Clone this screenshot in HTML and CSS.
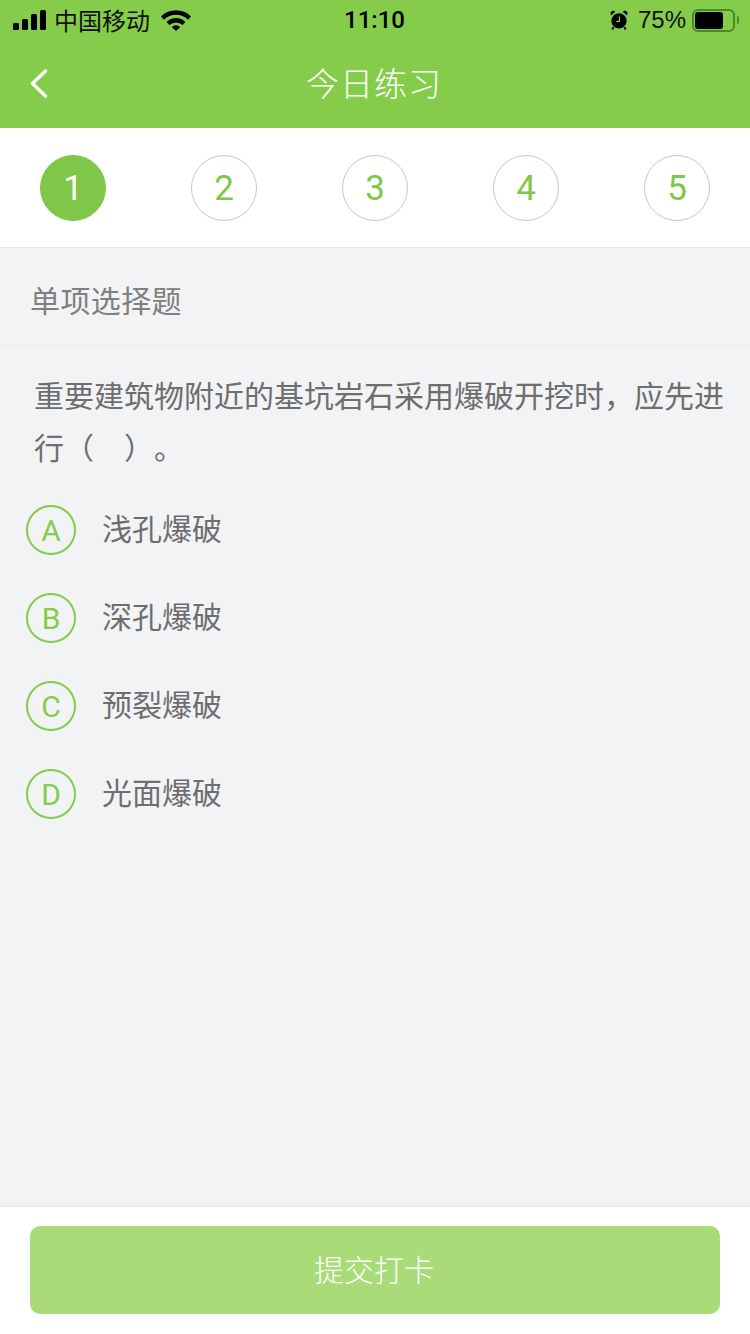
FILE: index.html
```html
<!DOCTYPE html>
<html lang="zh-CN">
<head>
  <meta charset="UTF-8">
  <title>今日练习</title>
  <link rel="stylesheet" href="styles.css">
</head>
<body>
  <div class="page">
    <div class="header">
      <div class="status-bar">
        <div class="status-left">
          <svg class="signal" width="34" height="20" viewBox="0 0 34 20">
            <rect x="0" y="13" width="6" height="7" rx="1.5"/>
            <rect x="9" y="9" width="6" height="11" rx="1.5"/>
            <rect x="18" y="4" width="6" height="16" rx="1.5"/>
            <rect x="27" y="0" width="6" height="20" rx="1.5"/>
          </svg>
          <span class="carrier">中国移动</span>
          <svg class="wifi" width="30" height="22" viewBox="0 0 30 22">
            <path d="M0 7.5 A21 21 0 0 1 30 7.5 L27 10.7 A17 17 0 0 0 3 10.7 Z"/>
            <path d="M5.5 13 A13.5 13.5 0 0 1 24.5 13 L21.5 16 A9.5 9.5 0 0 0 8.5 16 Z"/>
            <path d="M10.8 18 A6 6 0 0 1 19.2 18 L15 22 Z"/>
          </svg>
        </div>
        <div class="status-time">11:10</div>
        <div class="status-right">
          <svg class="alarm" width="18" height="20" viewBox="0 0 20 22">
            <circle cx="10" cy="12" r="8.5"/>
            <path d="M1 6 L6 1.8 L3 0.5 L0.5 2.8 Z M19 6 L14 1.8 L17 0.5 L19.5 2.8 Z"/>
            <path d="M4 19 L2.5 21.5 M16 19 L17.5 21.5" stroke="#000" stroke-width="2"/>
            <path d="M10.5 7 V12.5 H7" fill="none" stroke="#86cc4b" stroke-width="1.3"/>
          </svg>
          <span class="battery-text">75%</span>
          <div class="battery">
            <div class="battery-level"></div>
          </div>
          <div class="battery-cap"></div>
        </div>
      </div>
      <div class="nav-bar">
        <svg class="back" width="20" height="32" viewBox="0 0 20 32">
          <path d="M16.5 3 L3.5 15.5 L16.5 28" fill="none" stroke="#fff" stroke-width="3.4" stroke-linecap="round" stroke-linejoin="round"/>
        </svg>
        <div class="nav-title">今日练习</div>
      </div>
    </div>

    <div class="steps">
      <div class="step active">1</div>
      <div class="step">2</div>
      <div class="step">3</div>
      <div class="step">4</div>
      <div class="step">5</div>
    </div>

    <div class="content">
      <div class="type-title">单项选择题</div>
      <div class="question">重要建筑物附近的基坑岩石采用爆破开挖时，应先进行（　）。</div>
      <div class="options">
        <div class="option"><span class="letter">A</span><span class="option-text">浅孔爆破</span></div>
        <div class="option"><span class="letter">B</span><span class="option-text">深孔爆破</span></div>
        <div class="option"><span class="letter">C</span><span class="option-text">预裂爆破</span></div>
        <div class="option"><span class="letter">D</span><span class="option-text">光面爆破</span></div>
      </div>
    </div>

    <div class="footer">
      <button class="submit">提交打卡</button>
    </div>
  </div>
</body>
</html>
```

FILE: styles.css
```css
* {
  box-sizing: border-box;
  font-family: 'Noto Sans CJK SC', 'Liberation Sans', sans-serif;
}

body {
  margin: 0;
  background-color: #f2f3f5;
}

.page {
  display: flex;
  flex-direction: column;
  height: 1334px;
}

.header {
  background-color: #86cc4b;
  height: 128px;
}

.status-bar {
  display: grid;
  grid-template-columns: 1fr auto 1fr;
  align-items: center;
  height: 40px;
  color: #000;
  padding: 0 11px 0 13px;
}

.status-left {
  display: flex;
  align-items: center;
}

.signal {
  margin-right: 8px;
}

.carrier {
  font-size: 24px;
  line-height: 40px;
  width: 107px;
  color: #111;
  margin-left: -1px;
}

.status-time {
  padding-right: 3px;
  font-family: 'Roboto', 'Liberation Sans', sans-serif;
  font-size: 24px;
  font-weight: 500;
  line-height: 40px;
}

.status-right {
  display: flex;
  align-items: center;
  justify-content: flex-end;
}

.alarm {
  margin-right: 10px;
}

.battery-text {
  font-family: 'Liberation Sans', sans-serif;
  font-size: 24px;
  margin-right: 6px;
  color: #111;
}

.battery {
  width: 43px;
  height: 23px;
  margin-right: 1px;
  border: 2px solid #4a8a2a;
  border-radius: 6px;
  padding: 1px;
}

.battery-level {
  width: 28px;
  height: 17px;
  background-color: #000;
  border-radius: 3px;
}

.battery-cap {
  width: 2px;
  height: 8px;
  margin-left: 1px;
  background-color: #4a8a2a;
  border-radius: 0 2px 2px 0;
}

.nav-bar {
  position: relative;
  display: flex;
  align-items: center;
  justify-content: center;
  height: 88px;
  padding: 0 2px 4px 0;
}

.back {
  position: absolute;
  left: 29px;
  top: 28px;
}

.nav-title {
  color: #fff;
  font-size: 33px;
  font-weight: 300;
  letter-spacing: 1px;
}

.steps {
  display: flex;
  justify-content: space-between;
  align-items: center;
  height: 120px;
  padding: 0 40px;
  background-color: #fff;
  border-bottom: 1px solid #e6e6e6;
}

.step {
  display: flex;
  justify-content: center;
  align-items: center;
  width: 66px;
  height: 66px;
  padding-top: 1px;
  border: 1px solid #c8c8c8;
  border-radius: 50%;
  color: #7fc748;
  font-family: 'Roboto', 'Liberation Sans', sans-serif;
  font-size: 35px;
}

.step.active {
  background-color: #7fc748;
  border-color: #7fc748;
  color: #fff;
}

.content {
  flex: 1;
}

.type-title {
  height: 98px;
  padding-left: 30px;
  border-bottom: 1px solid #e9eaec;
  color: #808080;
  font-size: 30px;
  letter-spacing: 0.4px;
  line-height: 102px;
}

.question {
  padding: 22px 25px 0 34px;
  color: #6e6e6e;
  font-size: 30px;
  line-height: 52px;
  text-spacing-trim: space-all;
}

.options {
  padding: 33px 0 0 26px;
}

.option {
  display: flex;
  align-items: center;
  height: 50px;
  margin-bottom: 38px;
}

.letter {
  display: flex;
  justify-content: center;
  align-items: center;
  width: 50px;
  height: 50px;
  margin-right: 27px;
  padding-top: 1px;
  border: 2px solid #86cc4b;
  border-radius: 50%;
  color: #86cc4b;
  font-family: 'Roboto', 'Liberation Sans', sans-serif;
  font-size: 30px;
}

.option-text {
  color: #6e6e6e;
  font-size: 30px;
  margin: 0 0 6px -1px;
}

.footer {
  height: 128px;
  padding: 19px 30px 0;
  background-color: #fff;
  border-top: 1px solid #e6e6e6;
}

.submit {
  display: block;
  width: 100%;
  height: 88px;
  padding: 0 2px 4px 0;
  border: none;
  border-radius: 10px;
  background-color: #a9db78;
  color: #fff;
  font-size: 30px;
  font-weight: 300;
}
```
